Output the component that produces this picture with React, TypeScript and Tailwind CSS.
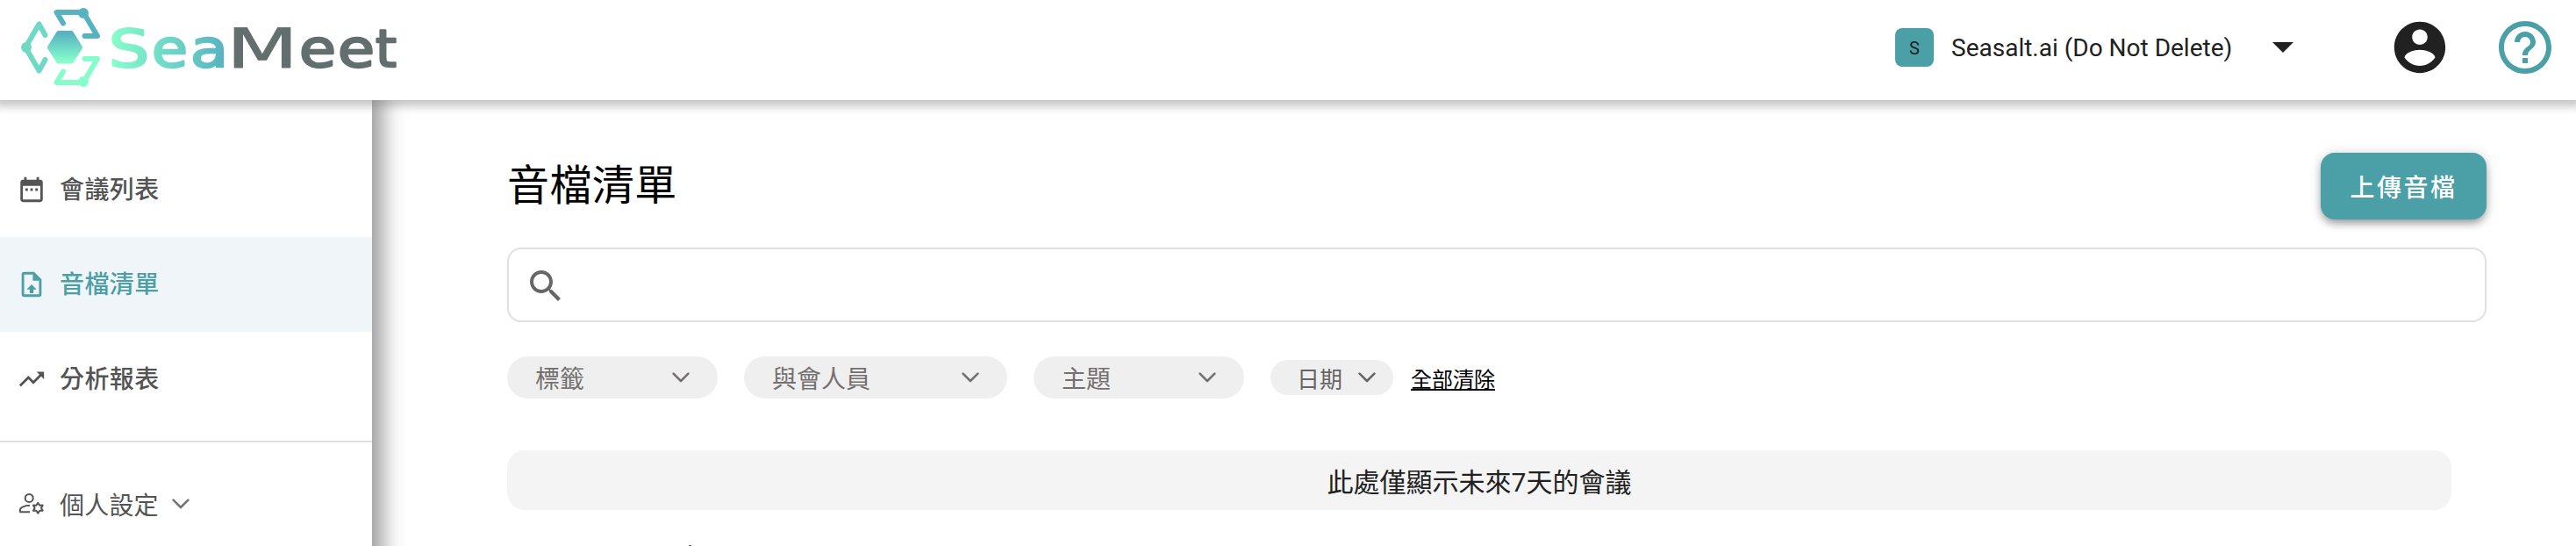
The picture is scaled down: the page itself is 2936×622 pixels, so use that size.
import React from "react";

const cjk = "font-[Roboto,'Noto_Sans_CJK_TC',sans-serif]";

function Icon({ d, className }: { d: string; className: string }) {
  return (
    <svg viewBox="0 0 24 24" fill="currentColor" className={className}>
      <path d={d} />
    </svg>
  );
}

function Chevron({ className }: { className: string }) {
  return (
    <svg viewBox="0 0 20 12" fill="none" stroke="currentColor" strokeWidth="2.6" strokeLinecap="round" strokeLinejoin="round" className={className}>
      <path d="M1.6 1.6 10 10 18.4 1.6" />
    </svg>
  );
}

function Logo() {
  return (
    <svg width="480" height="114" viewBox="0 0 480 114" className="shrink-0">
      <defs>
        <linearGradient id="hex" x1="0" y1="0" x2="0" y2="1">
          <stop offset="0" stopColor="#57b3c1" />
          <stop offset="1" stopColor="#87fdcb" />
        </linearGradient>
        <linearGradient id="sea" gradientUnits="userSpaceOnUse" x1="127" y1="0" x2="256" y2="0">
          <stop offset="0" stopColor="#87fdcb" />
          <stop offset="1" stopColor="#57b3c1" />
        </linearGradient>
      </defs>
      <g fill="none" strokeWidth="6" strokeLinecap="round" strokeLinejoin="round">
        <g stroke="#57b3c1">
          <path d="M72 26.500 64.500 14H95L111 41H96.500" />
          <circle cx="95" cy="15" r="3" />
        </g>
        <g stroke="#6fd9c6">
          <path d="M51.500 40 44.500 27.500 29 54 44.500 80.500 51.500 68" />
          <circle cx="30" cy="54" r="3" />
        </g>
        <g stroke="#87fdcb">
          <path d="M72 81.500 64.500 94H95L111 67H96.500" />
          <circle cx="95" cy="93" r="3" />
        </g>
      </g>
      <path d="M67 38H81L91 54 81 69.500H67L57 54Z" fill="url(#hex)" stroke="url(#hex)" strokeWidth="6" strokeLinejoin="round" />
      <g fontFamily="'DejaVu Sans'" fontSize="59" strokeWidth="2.400" strokeLinejoin="round">
        <g fill="url(#sea)" stroke="url(#sea)">
          <text x="124" y="76" textLength="46" lengthAdjust="spacingAndGlyphs">S</text>
          <text x="173" y="76" textLength="41" lengthAdjust="spacingAndGlyphs">e</text>
          <text x="217" y="76" textLength="43" lengthAdjust="spacingAndGlyphs">a</text>
        </g>
        <g fill="#636e6e" stroke="#636e6e">
          <text x="258" y="76.500" textLength="82" lengthAdjust="spacingAndGlyphs" strokeWidth="0.800" fontSize="62">M</text>
          <text x="341" y="76" textLength="42" lengthAdjust="spacingAndGlyphs">e</text>
          <text x="385" y="76" textLength="42" lengthAdjust="spacingAndGlyphs">e</text>
          <text x="428" y="76" textLength="24" lengthAdjust="spacingAndGlyphs">t</text>
        </g>
      </g>
    </svg>
  );
}

function Header() {
  return (
    <header className="relative z-20 flex h-[114px] shrink-0 items-center bg-white shadow-[0_0_10px_7px_rgba(0,0,0,0.23)]">
      <Logo />
      <div className="ml-auto flex h-full items-center pr-[22px] text-[#212121]">
        <div className="mt-[-6px] flex size-11 items-center justify-center rounded-lg bg-[#4b9fa7] pt-px text-[20px]">S</div>
        <span className="ml-5 mt-[-5px] w-[320px] whitespace-nowrap text-[28px] leading-none">Seasalt.ai (Do Not Delete)</span>
        <svg viewBox="0 0 24 12" className="ml-[46px] mt-[-6px] h-3 w-6" fill="currentColor"><path d="M0 0H24L12 12Z" /></svg>
        <Icon className="ml-[109px] mt-[-6px] size-[70px]" d="M12 2C6.480 2 2 6.480 2 12s4.480 10 10 10 10-4.480 10-10S17.520 2 12 2zm0 3c1.660 0 3 1.340 3 3s-1.340 3-3 3-3-1.340-3-3 1.340-3 3-3zm0 14.200c-2.500 0-4.710-1.280-6-3.220.030-1.990 4-3.080 6-3.080 1.990 0 5.970 1.090 6 3.080-1.290 1.940-3.500 3.220-6 3.220z" />
        <Icon className="ml-[49px] mt-[-6px] size-[72px] text-[#4b9fa7]" d="M11 18h2v-2h-2v2zm1-16C6.480 2 2 6.480 2 12s4.480 10 10 10 10-4.480 10-10S17.520 2 12 2zm0 18c-4.410 0-8-3.590-8-8s3.590-8 8-8 8 3.590 8 8-3.590 8-8 8zm0-14c-2.210 0-4 1.790-4 4h2c0-1.100.900-2 2-2s2 .900 2 2c0 2-3 1.750-3 5h2c0-2.250 3-2.500 3-5 0-2.210-1.790-4-4-4z" />
      </div>
    </header>
  );
}

const items = [
  { label: "會議列表", active: false, d: "M9 11H7v2h2v-2zm4 0h-2v2h2v-2zm4 0h-2v2h2v-2zm2-7h-1V2h-2v2H8V2H6v2H5c-1.110 0-1.990.900-1.990 2L3 20c0 1.100.890 2 2 2h14c1.100 0 2-.900 2-2V6c0-1.100-.900-2-2-2zm0 16H5V9h14v11z" },
  { label: "音檔清單", active: true, d: "M14 2H6A2 2 0 0 0 4 4V20A2 2 0 0 0 6 22H18A2 2 0 0 0 20 20V8L14 2M18 20H6V4H13V9H18V20M12 12L16 16H13.500V19H10.500V16H8L12 12Z" },
  { label: "分析報表", active: false, d: "M16 6l2.290 2.290-4.880 4.880-4-4L2 16.590 3.410 18l6-6 4 4 6.300-6.290L22 12V6z" },
];

function Sidebar() {
  return (
    <aside className="relative z-10 mb-[-60px] w-[424px] shrink-0 bg-white pt-12 shadow-[6px_0_24px_6px_rgba(0,0,0,0.4)]">
      {items.map((it) => (
        <div key={it.label} className={`flex h-[108px] items-center pl-[19px] ${it.active ? "bg-[#eff5f8] text-[#4b9fa7]" : "text-[#545454]"}`}>
          <Icon d={it.d} className="size-[34px]" />
          <span className="ml-[15px] pt-px text-[28px] leading-none font-medium tracking-[0.4px]">{it.label}</span>
        </div>
      ))}
      <div className="mt-[16px] h-[2px] bg-[#e0e0e0]" />
      <div className="flex h-[144px] items-center pl-[19px] text-[#545454]">
        <svg viewBox="0 0 34 34" className="size-[34px]" fill="none" stroke="currentColor" strokeWidth="2" strokeLinejoin="round">
          <circle cx="14.200" cy="8.400" r="4.500" />
          <path d="M15 16.800C8.500 16.800 4 19.300 4 21.500V24.200H15" />
          <path d="M24.300 13.800 26.200 16.700 29.700 16.600 28 19.700 29.700 22.800 26.200 22.700 24.300 25.600 22.400 22.700 18.900 22.800 20.600 19.700 18.900 16.600 22.400 16.700Z" />
        </svg>
        <span className="ml-[15px] pt-0.5 text-[28px] leading-none tracking-[0.2px]">個人設定</span>
        <Chevron className="ml-[15px] mb-1 h-3 w-5 text-[#757575]" />
      </div>
    </aside>
  );
}

function Filter({ label, width }: { label: string; width: string }) {
  return (
    <div className={`flex h-12 items-center justify-between rounded-3xl bg-[#efefef] pl-8 pr-8 text-[28px] leading-none text-[#757070] ${width}`}>
      <span className="pt-[5px]">{label}</span>
      <Chevron className="h-3 w-5" />
    </div>
  );
}

export default function App() {
  return (
    <div className={`flex h-[622px] w-[2936px] flex-col overflow-hidden bg-white ${cjk}`}>
      <Header />
      <div className="flex min-h-0 flex-1">
        <Sidebar />
        <main className="flex-1 pl-[154px] pr-[102px] pt-[60px]">
          <div className="flex h-[76px] items-center justify-between">
            <h1 className="text-[48px] leading-none tracking-[0.4px] text-black">音檔清單</h1>
            <button className="h-[76px] w-[189px] rounded-2xl bg-[#4b9fa7] pt-[5px] text-[28px] font-medium tracking-[2.500px] text-white shadow-[0_6px_10px_-2px_rgba(0,0,0,0.3),0_2px_14px_rgba(0,0,0,0.2)]">上傳音檔</button>
          </div>
          <div className="mt-8 flex h-[85px] items-center rounded-2xl border-2 border-[#e0e0e0] pl-[18px]">
            <Icon className="mt-[3px] size-12 text-[#666666]" d="M15.500 14h-.790l-.280-.270C15.410 12.590 16 11.110 16 9.500 16 5.910 13.090 3 9.500 3S3 5.910 3 9.500 5.910 16 9.500 16c1.610 0 3.090-.590 4.230-1.570l.270.280v.790l5 4.990L20.490 19l-4.990-5zm-6 0C7.010 14 5 11.990 5 9.500S7.010 5 9.500 5 14 7.010 14 9.500 11.990 14 9.500 14z" />
          </div>
          <div className="mt-[39px] flex h-12 items-center gap-[30px]">
            <Filter label="標籤" width="w-[240px]" />
            <Filter label="與會人員" width="w-[300px]" />
            <Filter label="主題" width="w-[240px]" />
            <div className="flex h-10 w-[140px] items-center justify-between rounded-[20px] bg-[#efefef] pl-[30px] pr-5 leading-none text-[#666666]">
              <span className="pt-1.5 text-[26px]">日期</span>
              <Chevron className="h-3 w-5" />
            </div>
            <a className="ml-[-10px] pt-1.5 text-[24px] leading-none text-black underline">全部清除</a>
          </div>
          <div className="mr-10 mt-[59px] flex h-[68px] items-center justify-center rounded-[20px] bg-[#f4f4f4] pt-[5px] text-[30px] text-[#212121]">此處僅顯示未來7天的會議</div>
          <div className="ml-[207px] mt-10 h-px w-[3px] bg-[#666666]" />
        </main>
      </div>
    </div>
  );
}
